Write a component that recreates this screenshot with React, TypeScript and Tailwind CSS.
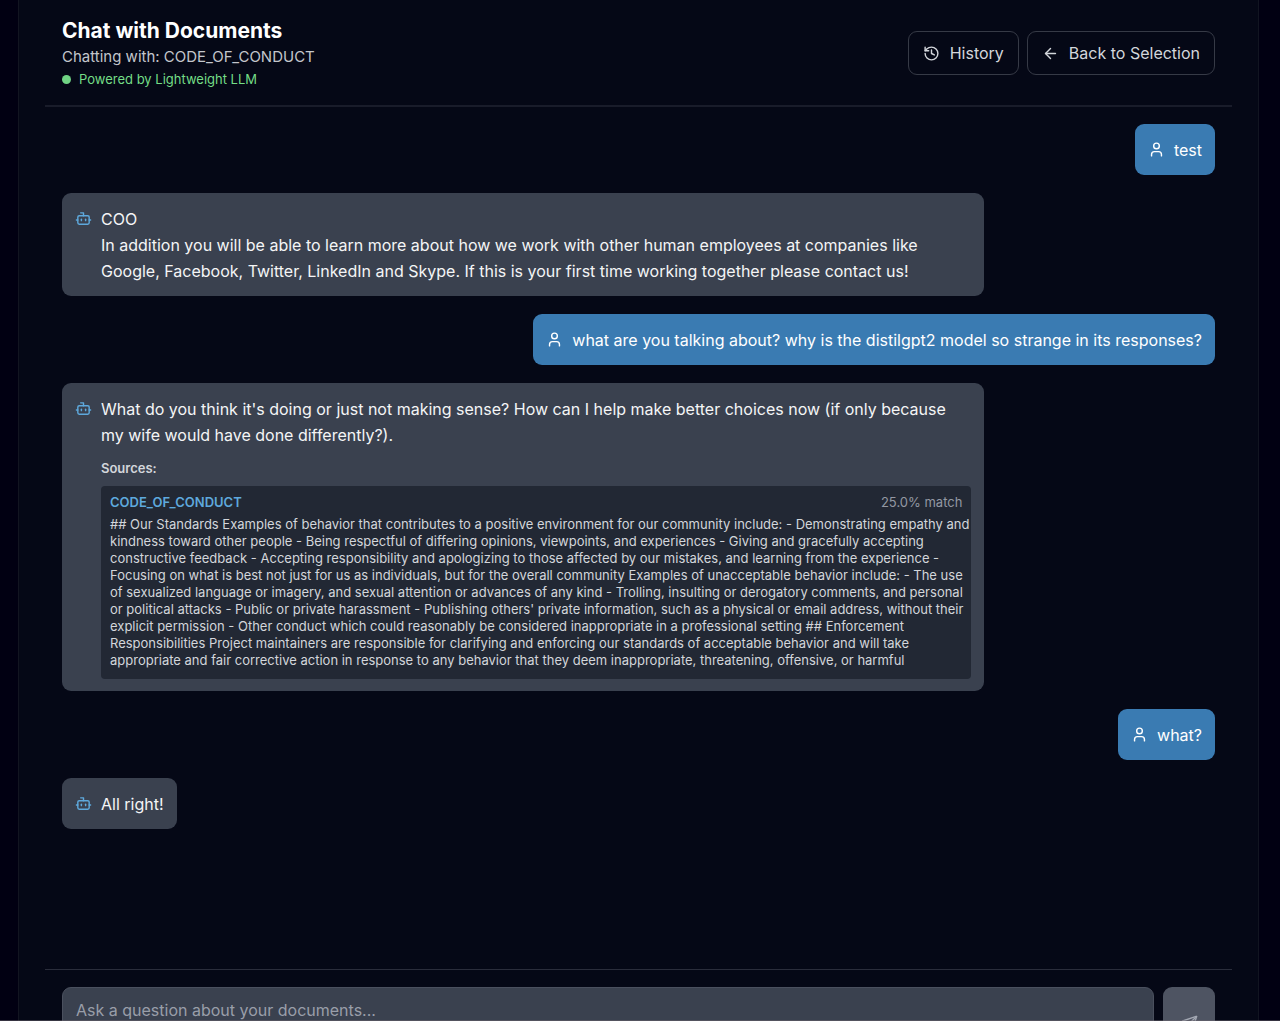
import type { ReactNode } from "react";
import { ArrowLeft, Bot, History, Send, User } from "lucide-react";

type Source = { title: string; match: string; excerpt: string };
type Message = { id: number; role: "user" | "bot"; text: string; source?: Source };

const messages: Message[] = [
  { id: 1, role: "user", text: "test" },
  {
    id: 2,
    role: "bot",
    text: "COO\nIn addition you will be able to learn more about how we work with other human employees at companies like Google, Facebook, Twitter, LinkedIn and Skype. If this is your first time working together please contact us!",
  },
  {
    id: 3,
    role: "user",
    text: "what are you talking about? why is the distilgpt2 model so strange in its responses?",
  },
  {
    id: 4,
    role: "bot",
    text: "What do you think it's doing or just not making sense? How can I help make better choices now (if only because my wife would have done differently?).",
    source: {
      title: "CODE_OF_CONDUCT",
      match: "25.0% match",
      excerpt:
        "## Our Standards Examples of behavior that contributes to a positive environment for our community include: - Demonstrating empathy and kindness toward other people - Being respectful of differing opinions, viewpoints, and experiences - Giving and gracefully accepting constructive feedback - Accepting responsibility and apologizing to those affected by our mistakes, and learning from the experience - Focusing on what is best not just for us as individuals, but for the overall community Examples of unacceptable behavior include: - The use of sexualized language or imagery, and sexual attention or advances of any kind - Trolling, insulting or derogatory comments, and personal or political attacks - Public or private harassment - Publishing others' private information, such as a physical or email address, without their explicit permission - Other conduct which could reasonably be considered inappropriate in a professional setting ## Enforcement Responsibilities Project maintainers are responsible for clarifying and enforcing our standards of acceptable behavior and will take appropriate and fair corrective action in response to any behavior that they deem inappropriate, threatening, offensive, or harmful",
    },
  },
  { id: 5, role: "user", text: "what?" },
  { id: 6, role: "bot", text: "All right!" },
];

function HeaderButton({ icon, children }: { icon: ReactNode; children: ReactNode }) {
  return (
    <button
      type="button"
      className="flex items-center gap-[10px] rounded-[9px] border border-[#363a46] px-[14px] py-2 text-base leading-[26px] text-[#d3d6db]"
    >
      {icon}
      {children}
    </button>
  );
}

function SourceCard({ source }: { source: Source }) {
  return (
    <section className="mt-3">
      <h2 className="text-[13px] leading-[17px] font-semibold text-[#d3d6db]">Sources:</h2>
      <article className="mt-[9px] rounded bg-[#222834] pt-2 pb-[10px] pl-[9px] text-[13px] leading-[17px]">
        <header className="mb-[5px] flex items-center justify-between pr-[9px]">
          <h3 className="font-semibold text-[#5ea9dd]">{source.title}</h3>
          <span className="text-[#9398a3]">{source.match}</span>
        </header>
        <p className="text-[#d3d6db]">{source.excerpt}</p>
      </article>
    </section>
  );
}

function Bubble({ message }: { message: Message }) {
  const isUser = message.role === "user";
  return (
    <li className={isUser ? "flex justify-end" : "flex justify-start"}>
      <div
        className={
          isUser
            ? "flex max-w-4/5 gap-[9px] rounded-[9px] bg-[#3a7bb2] px-[13px] pt-[13px] pb-3 text-white"
            : "flex max-w-4/5 gap-[9px] rounded-[9px] bg-[#3a414f] px-[13px] pt-[13px] pb-3 text-[#f4f5f6]"
        }
      >
        {isUser ? (
          <User className="mt-1 size-[17px] shrink-0" aria-hidden />
        ) : (
          <Bot className="mt-1 size-[17px] shrink-0 text-[#5ea9dd]" aria-hidden />
        )}
        <div className="min-w-0">
          <p className="text-base leading-[26px] whitespace-pre-line">{message.text}</p>
          {message.source && <SourceCard source={message.source} />}
        </div>
      </div>
    </li>
  );
}

export default function App() {
  return (
    <div className="relative h-screen overflow-hidden bg-[#010012] px-[18px] font-['Inter',sans-serif]">
      <main className="mr-[3px] flex min-h-[calc(100vh+55px)] flex-col border-x border-[#121521] bg-[#050816] px-[26px]">
        <header className="flex items-center justify-between border-b-2 border-[#191c2a] px-[17px] pt-[18px] pb-[17px]">
          <div>
            <h1 className="text-[21px] leading-[26px] font-bold text-white">Chat with Documents</h1>
            <p className="text-[15px] leading-[26px] text-[#c3c6cc]">Chatting with: CODE_OF_CONDUCT</p>
            <p className="flex items-center gap-2 text-[13px] leading-[18px] text-[#74dd86]">
              <span className="size-[9px] rounded-full bg-[#70d384]" />
              Powered by Lightweight LLM
            </p>
          </div>
          <div className="flex items-center gap-2">
            <HeaderButton icon={<History className="size-[17px]" aria-hidden />}>History</HeaderButton>
            <HeaderButton icon={<ArrowLeft className="size-[17px]" aria-hidden />}>
              Back to Selection
            </HeaderButton>
          </div>
        </header>

        <ul className="flex grow flex-col gap-[18px] p-[17px]">
          {messages.map((message) => (
            <Bubble key={message.id} message={message} />
          ))}
        </ul>

        <form
          className="flex gap-[9px] border-t border-[#2a2d3b] p-[17px]"
          onSubmit={(event) => event.preventDefault()}
        >
          <textarea
            rows={2}
            aria-label="Question"
            placeholder="Ask a question about your documents..."
            className="block grow resize-none rounded-[9px] border border-[#4a505e] bg-[#3a414f] px-[13px] py-[9px] text-base leading-[26px] text-white placeholder:text-[#999ea9]"
          />
          <button
            type="submit"
            aria-label="Send"
            className="flex w-[52px] items-center justify-center rounded-[9px] bg-[#4e5462] text-[#a3a8b3]"
          >
            <Send className="size-[17px]" aria-hidden />
          </button>
        </form>
      </main>
      <div className="absolute inset-x-0 bottom-0 h-px bg-[#6b6570]/50" />
    </div>
  );
}
